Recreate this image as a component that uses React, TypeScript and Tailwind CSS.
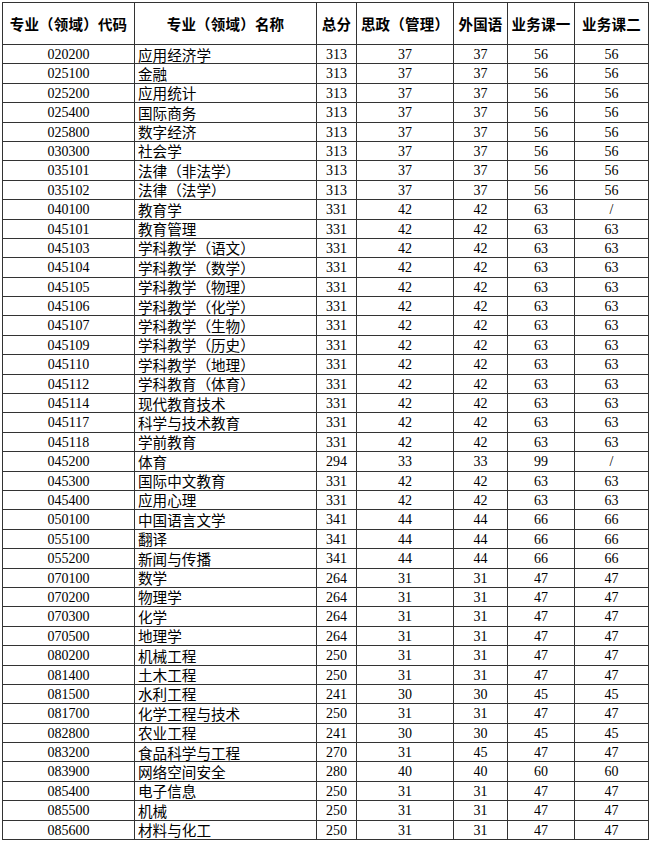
import React from "react";

type Row = [string, string, string, string, string, string, string];

const rows: Row[] = [
  ["020200", "应用经济学", "313", "37", "37", "56", "56"],
  ["025100", "金融", "313", "37", "37", "56", "56"],
  ["025200", "应用统计", "313", "37", "37", "56", "56"],
  ["025400", "国际商务", "313", "37", "37", "56", "56"],
  ["025800", "数字经济", "313", "37", "37", "56", "56"],
  ["030300", "社会学", "313", "37", "37", "56", "56"],
  ["035101", "法律（非法学）", "313", "37", "37", "56", "56"],
  ["035102", "法律（法学）", "313", "37", "37", "56", "56"],
  ["040100", "教育学", "331", "42", "42", "63", "/"],
  ["045101", "教育管理", "331", "42", "42", "63", "63"],
  ["045103", "学科教学（语文）", "331", "42", "42", "63", "63"],
  ["045104", "学科教学（数学）", "331", "42", "42", "63", "63"],
  ["045105", "学科教学（物理）", "331", "42", "42", "63", "63"],
  ["045106", "学科教学（化学）", "331", "42", "42", "63", "63"],
  ["045107", "学科教学（生物）", "331", "42", "42", "63", "63"],
  ["045109", "学科教学（历史）", "331", "42", "42", "63", "63"],
  ["045110", "学科教学（地理）", "331", "42", "42", "63", "63"],
  ["045112", "学科教育（体育）", "331", "42", "42", "63", "63"],
  ["045114", "现代教育技术", "331", "42", "42", "63", "63"],
  ["045117", "科学与技术教育", "331", "42", "42", "63", "63"],
  ["045118", "学前教育", "331", "42", "42", "63", "63"],
  ["045200", "体育", "294", "33", "33", "99", "/"],
  ["045300", "国际中文教育", "331", "42", "42", "63", "63"],
  ["045400", "应用心理", "331", "42", "42", "63", "63"],
  ["050100", "中国语言文学", "341", "44", "44", "66", "66"],
  ["055100", "翻译", "341", "44", "44", "66", "66"],
  ["055200", "新闻与传播", "341", "44", "44", "66", "66"],
  ["070100", "数学", "264", "31", "31", "47", "47"],
  ["070200", "物理学", "264", "31", "31", "47", "47"],
  ["070300", "化学", "264", "31", "31", "47", "47"],
  ["070500", "地理学", "264", "31", "31", "47", "47"],
  ["080200", "机械工程", "250", "31", "31", "47", "47"],
  ["081400", "土木工程", "250", "31", "31", "47", "47"],
  ["081500", "水利工程", "241", "30", "30", "45", "45"],
  ["081700", "化学工程与技术", "250", "31", "31", "47", "47"],
  ["082800", "农业工程", "241", "30", "30", "45", "45"],
  ["083200", "食品科学与工程", "270", "31", "45", "47", "47"],
  ["083900", "网络空间安全", "280", "40", "40", "60", "60"],
  ["085400", "电子信息", "250", "31", "31", "47", "47"],
  ["085500", "机械", "250", "31", "31", "47", "47"],
  ["085600", "材料与化工", "250", "31", "31", "47", "47"],
];

const headers = [
  "专业（领域）代码",
  "专业（领域）名称",
  "总分",
  "思政（管理）",
  "外国语",
  "业务课一",
  "业务课二",
];

const widths = ["w-[132px]", "w-[182px]", "w-[40px]", "w-[97px]", "w-[54px]", "w-[67px]", "w-[74px]"];

export default function App() {
  return (
    <div className="min-h-[851px] bg-white pl-[2px] pt-[2px] text-black">
      <table
        className="table-fixed border-collapse border border-[#333] w-[647px] text-[14px]"
        style={{ fontFamily: '"Liberation Serif", "Noto Sans CJK SC", serif' }}
      >
        <colgroup>
          {widths.map((w, i) => (
            <col key={i} className={w} />
          ))}
        </colgroup>
        <thead>
          <tr className="h-[42px]">
            {headers.map((h) => (
              <th
                key={h}
                className="border border-[#333] p-0 pt-[2px] text-center font-bold whitespace-nowrap text-[14.5px] leading-none tracking-[0.2px] font-['Noto_Sans_CJK_SC',sans-serif]"
              >
                {h}
              </th>
            ))}
          </tr>
        </thead>
        <tbody>
          {rows.map((r) => (
            <tr key={r[0]}>
              {r.map((c, i) => (
                <td key={i} className="border border-[#333] p-0">
                  <div
                    className={`h-[18.4px] leading-[18px] whitespace-nowrap ${
                      i === 1
                        ? "pt-[0.5px] pl-[3px] text-left text-[14.6px] font-['Noto_Sans_CJK_SC',sans-serif]"
                        : "pt-[1px] text-center"
                    }`}
                  >
                    {c}
                  </div>
                </td>
              ))}
            </tr>
          ))}
        </tbody>
      </table>
    </div>
  );
}
